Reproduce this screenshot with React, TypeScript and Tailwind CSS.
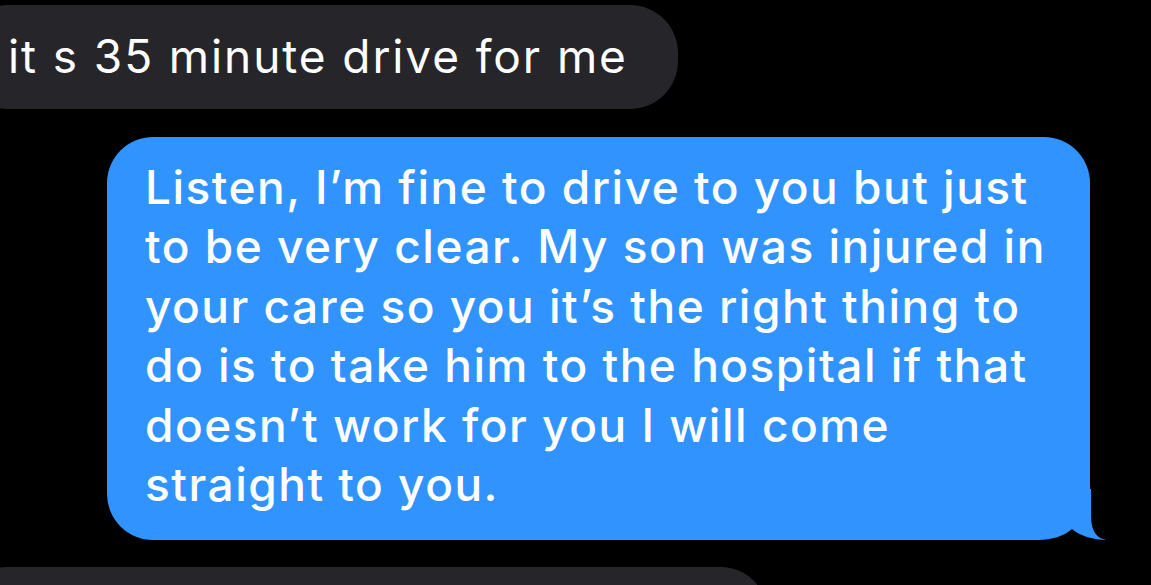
import React from 'react';

const lines = [
  'Listen, I\u2019m fine to drive to you but just',
  'to be very clear. My son was injured in',
  'your care so you it\u2019s the right thing to',
  'do is to take him to the hospital if that',
  'doesn\u2019t work for you I will come',
  'straight to you.',
];

function Tail() {
  return (
    <svg
      className="absolute right-[-20px] bottom-0 w-[80px] h-[51px]"
      viewBox="0 0 80 51"
      fill="none"
    >
      <rect x="0" y="0" width="80" height="51" fill="#000" />
      <path
        d="M0 0 H61 V27 C61 42 67 50 77 51 C64 51 50 47 42 40 C34 47 22 51 8 51 H0 Z"
        fill="#3194fe"
      />
    </svg>
  );
}

export default function App() {
  return (
    <div
      className="w-[1151px] h-[585px] bg-black overflow-hidden flex flex-col pt-[5px] text-white"
      style={{ fontFamily: 'Inter, "Noto Sans", sans-serif' }}
    >
      {/* incoming */}
      <div className="self-start ml-[-40px] pl-[48px] pr-[50px] pt-[22px] pb-[22px] bg-[#262529] rounded-[48px] text-[46px] leading-[59.5px] tracking-[1.9px] whitespace-nowrap">
        it s 35 minute drive for me
      </div>

      {/* outgoing */}
      <div className="self-end mr-[61px] mt-[28px] relative">
        <div className="bg-[#3194fe] rounded-[46px] pl-[38px] pr-[30px] pt-[21px] pb-[25px] text-[46px] font-medium leading-[59.5px] tracking-[1.5px] w-[983px]">
          {lines.map((l) => (
            <div key={l} className="whitespace-nowrap">
              {l}
            </div>
          ))}
        </div>
        <Tail />
      </div>

      {/* next incoming, cut off */}
      <div className="self-start ml-[-40px] mt-[27px] w-[807px] h-[120px] shrink-0 bg-[#262529] rounded-[46px]" />
    </div>
  );
}
